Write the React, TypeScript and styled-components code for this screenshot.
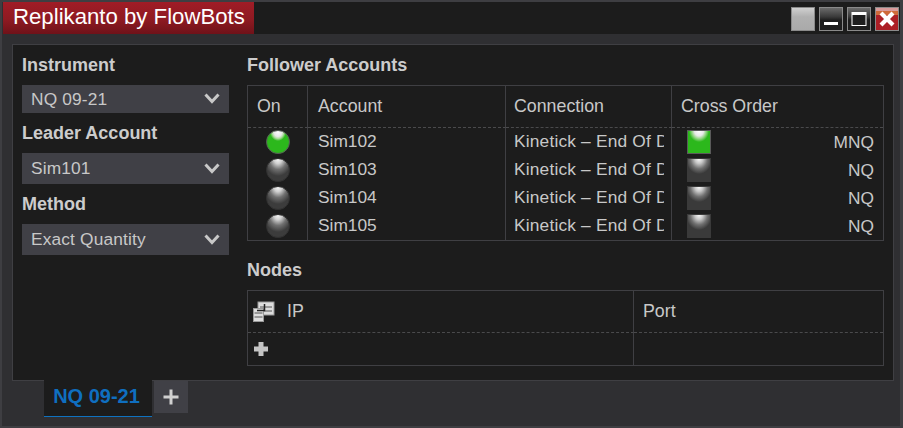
import React from "react";
import styled, { createGlobalStyle } from "styled-components";

const Global = createGlobalStyle`
  html, body { margin: 0; padding: 0; background: #2f2f32; }
  #root { width: 903px; height: 428px; overflow: hidden; }
  * { box-sizing: border-box; }
`;

const Win = styled.div`
  width: 903px;
  height: 428px;
  border: 2px solid #3e3e42;
  border-right-width: 3px;
  padding: 0 0 0 1px;
  background: #2f2f32;
  font-family: "Liberation Sans", Arial, sans-serif;
  font-size: 17.33px;
  color: #c8c8c8;
  display: flex;
  flex-direction: column;
`;
const TitleBar = styled.div`
  height: 32px;
  background: #1c1c1c;
  display: flex;
  justify-content: space-between;
  flex: none;
`;
const Title = styled.div`
  width: 251px;
  background: linear-gradient(#a01c26 0%, #8e1a22 55%, #6f1219 100%);
  color: #fff;
  font-size: 22.2px;
  line-height: 30px;
  padding-left: 10px;
  white-space: nowrap;
`;
const Buttons = styled.div`
  display: flex;
  gap: 4px;
  padding: 5px 0 0 0;
  margin-right: 1px;
`;
const WinBtn = styled.div<{ $kind: string }>`
  width: 24px;
  height: 24px;
  border: 1px solid #8a8a8a;
  display: flex;
  align-items: center;
  justify-content: center;
  background: ${(p) =>
    p.$kind === "blank"
      ? "linear-gradient(#d0d0d0, #b0b0b0 40%, #aaa)"
      : p.$kind === "close"
      ? "linear-gradient(#d89a9a 0, #d89a9a 14%, #cf6a3a 15%, #cf6a3a 30%, #ac1f26 31%)"
      : "linear-gradient(#6a6a6a, #3a3a3a 40%, #1e1e1e 55%)"};
`;
const Content = styled.div`
  margin: 10px 6px 0 9px;
  height: 337px;
  flex: none;
  background: #1c1c1c;
  border: 1px solid #3f3f43;
  display: flex;
  padding: 0 9px 0 9px;
`;
const Left = styled.div`
  width: 207px;
  margin-right: 18px;
  flex: none;
  padding-top: 10px;
`;
const Label = styled.div<{ $h?: number; $below?: number }>`
  font-weight: 700;
  font-size: 18px;
  line-height: ${(p) => p.$h ?? 20}px;
  margin-bottom: ${(p) => p.$below ?? 0}px;
  color: #cccccc;
`;
const Select = styled.div<{ $h: number }>`
  height: ${(p) => p.$h}px;
  background: #404046;
  color: #c8c8c8;
  letter-spacing: 0.15px;
  display: flex;
  align-items: center;
  justify-content: space-between;
  padding: 0 9px;
`;
const Right = styled.div`
  flex: 1;
  padding-top: 10px;
`;
const Table = styled.div<{ $cols: string }>`
  display: grid;
  grid-template-columns: ${(p) => p.$cols};
  border: 1px solid #3f3f43;
  margin-top: 10px;
`;
const HeadCell = styled.div<{ $last?: boolean; $pad?: number }>`
  height: 42px;
  padding-left: ${(p) => p.$pad ?? 9}px;
  border-right: ${(p) => (p.$last ? "none" : "1px solid #3f3f43")};
  border-bottom: 1px dashed #4a4a4c;
  color: #c8c8c8;
  font-size: 17.8px;
  display: flex;
  align-items: center;
`;
const Cell = styled.div<{ $last?: boolean; $h?: number }>`
  height: ${(p) => p.$h ?? 28}px;
  line-height: 27px;
  padding-left: 10px;
  border-right: ${(p) => (p.$last ? "none" : "1px solid #3f3f43")};
  white-space: nowrap;
  overflow: hidden;
`;
const ClipCell = styled(Cell)`
  padding: 0 7px 0 8px;
`;
const Clip = styled.div`
  overflow: hidden;
  letter-spacing: 0.18px;
`;
const LedCell = styled(Cell)`
  padding: 0 0 0 18px;
  display: flex;
  align-items: center;
`;
const Led = styled.div<{ $on?: boolean }>`
  width: 24px;
  height: 24px;
  border-radius: 50%;
  border: 1px solid ${(p) => (p.$on ? "#585858" : "#303030")};
  background: ${(p) =>
    p.$on
      ? "radial-gradient(ellipse 8px 9px at 50% 1px, #ffffff 0, #e8e8e8 50%, #b0dca0 72%, #2cb81c 100%), #2cb81c"
      : "radial-gradient(ellipse 14px 17px at 50% 0, #f8f8f8 0, #d0d0d0 28%, #707070 62%, #3c3c3c 100%), #3c3c3c"};
`;
const CrossCell = styled(Cell)`
  padding: 0 9px 0 15px;
  display: flex;
  align-items: center;
  justify-content: space-between;
`;
const Square = styled.div<{ $on?: boolean }>`
  width: 24px;
  height: 24px;
  border: 1px solid ${(p) => (p.$on ? "#5a5a5a" : "#3a3a3a")};
  background: ${(p) =>
    p.$on
      ? "radial-gradient(ellipse 10px 11px at 50% 0, #ffffff 0, #e8e8e8 45%, #90d480 72%, #2cb81c 100%), #2cb81c"
      : "radial-gradient(ellipse 13px 15px at 50% 0, #f8f8f8 0, #c8c8c8 30%, #707070 65%, #3a3a3a 100%), #3a3a3a"};
`;
const NodesLabel = styled(Label)`
  margin-top: 19px;
`;
const IconGap = styled.span`
  margin-left: 12px;
`;
const PlusCell = styled(Cell)`
  padding-left: 5px;
  display: flex;
  align-items: center;
`;
const TabStrip = styled.div`
  display: flex;
  margin: -1px 0 0 41px;
  gap: 2px;
  position: relative;
`;
const Tab = styled.div`
  width: 108px;
  height: 37px;
  background: #1c1c1c;
  border-bottom: 1px solid #0f72c0;
  color: #0f6fc0;
  font-weight: 700;
  font-size: 20px;
  line-height: 32px;
  padding-right: 3px;
  text-align: center;
`;
const AddTab = styled.div`
  width: 34px;
  height: 32px;
  margin-top: 1px;
  background: #404046;
  display: flex;
  align-items: center;
  justify-content: center;
`;

const Chevron = () => (
  <svg width="16" height="12" viewBox="0 0 16 12">
    <path d="M1.5 1.5 L8 8.5 L14.5 1.5" fill="none" stroke="#c8c8c8" strokeWidth="3" />
  </svg>
);

const rows = [
  { n: "Sim102", on: true, s: "MNQ" },
  { n: "Sim103", on: false, s: "NQ" },
  { n: "Sim104", on: false, s: "NQ" },
  { n: "Sim105", on: false, s: "NQ" },
];

export default function App() {
  return (
    <Win>
      <Global />
      <TitleBar>
        <Title>Replikanto by FlowBots</Title>
        <Buttons>
          <WinBtn $kind="blank" />
          <WinBtn $kind="min">
            <svg width="16" height="16" viewBox="0 0 16 16">
              <rect x="1" y="11" width="14" height="3" fill="#fff" />
            </svg>
          </WinBtn>
          <WinBtn $kind="max">
            <svg width="16" height="16" viewBox="0 0 16 16">
              <rect x="1" y="1.5" width="14" height="13" fill="#1e1e1e" stroke="#fff" strokeWidth="1" />
              <rect x="1" y="1" width="14" height="3" fill="#fff" />
            </svg>
          </WinBtn>
          <WinBtn $kind="close">
            <svg width="18" height="18" viewBox="0 0 18 18">
              <path d="M3 3 L15 15 M15 3 L3 15" stroke="#fff" strokeWidth="4.2" />
            </svg>
          </WinBtn>
        </Buttons>
      </TitleBar>
      <Content>
        <Left>
          <Label $below={10}>Instrument</Label>
          <Select $h={28}>
            NQ 09-21
            <Chevron />
          </Select>
          <Label $h={40}>Leader Account</Label>
          <Select $h={31}>
            Sim101
            <Chevron />
          </Select>
          <Label $h={40}>Method</Label>
          <Select $h={31}>
            Exact Quantity
            <Chevron />
          </Select>
        </Left>
        <Right>
          <Label>Follower Accounts</Label>
          <Table $cols="60px 198px 166px 1fr">
            <HeadCell>On</HeadCell>
            <HeadCell $pad={10}>Account</HeadCell>
            <HeadCell $pad={8}>Connection</HeadCell>
            <HeadCell $last>Cross Order</HeadCell>
            {rows.map((r) => (
              <React.Fragment key={r.n}>
                <LedCell>
                  <Led $on={r.on} />
                </LedCell>
                <Cell>{r.n}</Cell>
                <ClipCell>
                  <Clip>Kinetick – End Of Day</Clip>
                </ClipCell>
                <CrossCell $last>
                  <Square $on={r.on} />
                  {r.s}
                </CrossCell>
              </React.Fragment>
            ))}
          </Table>
          <NodesLabel>Nodes</NodesLabel>
          <Table $cols="386px 1fr">
            <HeadCell $pad={4}>
              <svg width="23" height="22" viewBox="0 0 23 22">
                <rect x="6" y="1" width="16" height="13" fill="#ddd" stroke="#999" />
                <path d="M8 6h12M8 10h12" stroke="#555" strokeWidth="1" />
                <rect x="1.5" y="7.5" width="10" height="13" fill="#ddd" stroke="#999" />
                <path d="M2.5 12h8M2.5 16h8" stroke="#555" strokeWidth="1" />
                <path d="M5 9.5 H12.5 V3" fill="none" stroke="#222" strokeWidth="1.5" />
              </svg>
              <IconGap>IP</IconGap>
            </HeadCell>
            <HeadCell $last>Port</HeadCell>
            <PlusCell $h={32}>
              <svg width="16" height="16" viewBox="0 0 16 16">
                <path d="M8 1 V15 M1 8 H15" stroke="#c4c4c4" strokeWidth="5" />
              </svg>
            </PlusCell>
            <Cell $last $h={32} />
          </Table>
        </Right>
      </Content>
      <TabStrip>
        <Tab>NQ 09-21</Tab>
        <AddTab>
          <svg width="16" height="16" viewBox="0 0 16 16">
            <path d="M8 0.5 V15.5 M0.5 8 H15.5" stroke="#d0d0d0" strokeWidth="3" />
          </svg>
        </AddTab>
      </TabStrip>
    </Win>
  );
}
